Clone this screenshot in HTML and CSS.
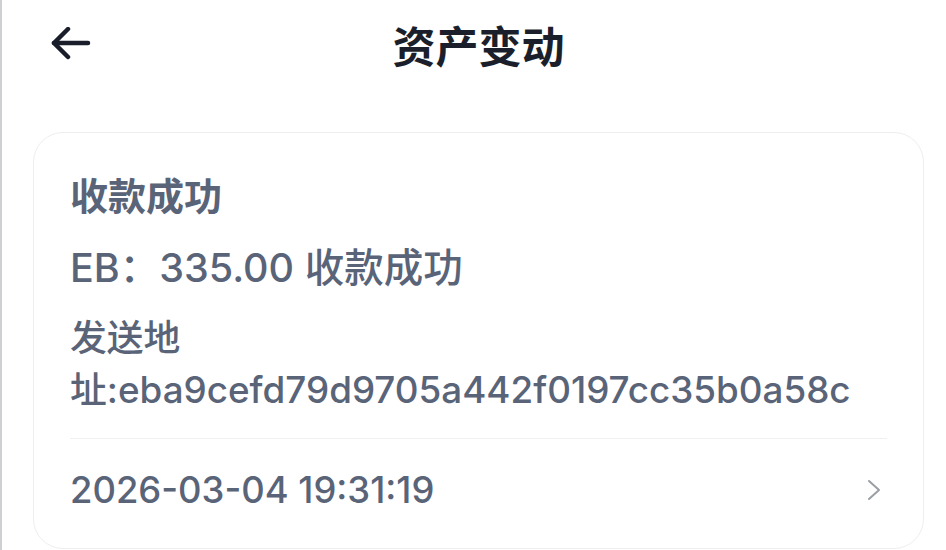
FILE: index.html
```html
<!DOCTYPE html>
<html lang="zh-CN">
<head>
  <meta charset="UTF-8">
  <title>资产变动</title>
  <link rel="stylesheet" href="styles.css">
</head>
<body>
  <div class="page">
    <header class="top-bar">
      <button class="back-btn" aria-label="返回">
        <svg width="40" height="34" viewBox="0 0 40 34" fill="none" stroke="currentColor" stroke-width="4.5" stroke-linecap="round" stroke-linejoin="round">
          <path d="M37 16H3"/>
          <path d="M17 2L3 16l14 14"/>
        </svg>
      </button>
      <h1 class="page-title">资产变动</h1>
      <span class="spacer"></span>
    </header>

    <div class="record-card">
      <div class="record-title">收款成功</div>
      <div class="record-amount">EB：335.00 收款成功</div>
      <div class="record-address">发送地址:eba9cefd79d9705a442f0197cc35b0a58c</div>
      <div class="record-footer">
        <span class="record-time">2026-03-04 19:31:19</span>
        <svg class="chevron" width="14" height="22" viewBox="0 0 14 22" fill="none" stroke="currentColor" stroke-width="2" stroke-linecap="round" stroke-linejoin="round">
          <path d="M2 2l10 9-10 9"/>
        </svg>
      </div>
    </div>
  </div>
</body>
</html>
```

FILE: styles.css
```css
* {
  box-sizing: border-box;
}

body {
  margin: 0;
  background: #fff;
  font-family: Inter, "Noto Sans CJK SC", sans-serif;
}

.page {
  min-height: 550px;
  border-left: 2px solid #cfd0d2;
  padding: 0 22px 0 31px;
}

.top-bar {
  display: grid;
  grid-template-columns: 1fr auto 1fr;
  align-items: center;
  height: 88px;
}

.back-btn {
  justify-self: start;
  display: flex;
  background: none;
  border: none;
  padding: 0 0 0 18px;
  color: #1a1e2b;
  cursor: pointer;
}

.page-title {
  margin: 0;
  font-size: 43px;
  font-weight: 700;
  color: #1b1f2b;
  font-family: "Noto Sans CJK SC", sans-serif;
}

.record-card {
  margin-top: 44px;
  border: 1.5px solid #eceef0;
  border-radius: 30px;
  padding: 35px 36px 33px;
  color: #5a6478;
  font-weight: 500;
}

.record-title {
  font-family: "Noto Sans CJK SC", sans-serif;
  font-size: 38px;
  font-weight: 700;
  line-height: 52px;
}

.record-amount {
  margin-top: 21px;
  font-size: 39.5px;
  line-height: 54px;
}

.record-address {
  margin-top: 17px;
  font-size: 36.8px;
  line-height: 52px;
}

.record-footer {
  display: flex;
  align-items: center;
  justify-content: space-between;
  margin-top: 22px;
  padding-top: 26px;
  border-top: 1.5px solid #eef0f2;
}

.record-time {
  font-size: 36.4px;
  line-height: 50px;
}

.chevron {
  color: #9a9ea5;
  margin-right: 6px;
}
```
